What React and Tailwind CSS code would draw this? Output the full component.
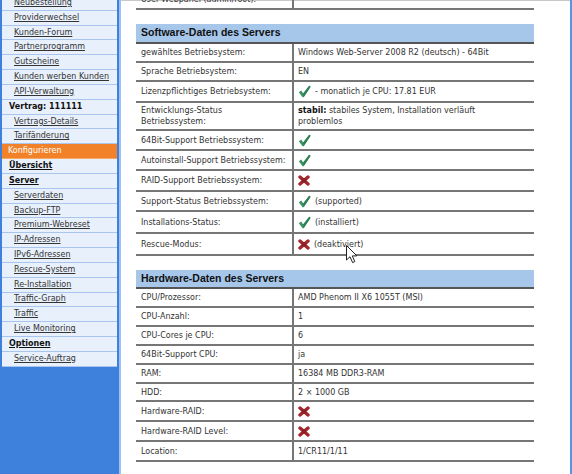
import React from "react";

const nav = [
  { t: "Neubestellung", k: "sub" },
  { t: "Providerwechsel", k: "sub" },
  { t: "Kunden-Forum", k: "sub" },
  { t: "Partnerprogramm", k: "sub" },
  { t: "Gutscheine", k: "sub" },
  { t: "Kunden werben Kunden", k: "sub" },
  { t: "API-Verwaltung", k: "sub" },
  { t: "Vertrag: 111111", k: "head" },
  { t: "Vertrags-Details", k: "sub" },
  { t: "Tarifänderung", k: "sub" },
  { t: "Konfigurieren", k: "orange" },
  { t: "Übersicht", k: "bold" },
  { t: "Server", k: "bold" },
  { t: "Serverdaten", k: "sub" },
  { t: "Backup-FTP", k: "sub" },
  { t: "Premium-Webreset", k: "sub" },
  { t: "IP-Adressen", k: "sub" },
  { t: "IPv6-Adressen", k: "sub" },
  { t: "Rescue-System", k: "sub" },
  { t: "Re-Installation", k: "sub" },
  { t: "Traffic-Graph", k: "sub" },
  { t: "Traffic", k: "sub" },
  { t: "Live Monitoring", k: "sub" },
  { t: "Optionen", k: "bold" },
  { t: "Service-Auftrag", k: "sub" },
];

function Check() {
  return (
    <svg width="13" height="13" viewBox="0 0 13 13" className="shrink-0">
      <path d="M0.8 7.2 L3.2 5.6 L5.2 8.4 L11.2 0.8 L12.6 1.8 L5.6 12.2 L4.6 12.2 Z" fill="#3a9464" />
      <path d="M5.2 8.4 L11.2 0.8 L12.6 1.8 L5.6 12.2 Z" fill="#2f7f54" />
    </svg>
  );
}

function Cross() {
  return (
    <svg width="12" height="11" viewBox="0 0 12 11" className="shrink-0">
      <path d="M2 2 L10 9 M10 2 L2 9" stroke="#a3262b" strokeWidth="3.4" strokeLinecap="round" />
      <circle cx="6" cy="5.5" r="2.3" fill="#8e1e24" />
    </svg>
  );
}

function Row({ label, h, children }) {
  return (
    <div className="flex border-b-2 border-[#767676]" style={{ height: h }}>
      <div className="w-[158px] shrink-0 border-r-2 border-[#767676] pl-[5px] flex items-center leading-[11px]">
        {label}
      </div>
      <div className="flex-1 pl-[4px] flex items-center gap-[4px] leading-[11px]">{children}</div>
    </div>
  );
}

function Header({ title, h }) {
  return (
    <div
      className="bg-[#a6c7ea] border-b-2 border-[#555] pl-[5px] flex items-center font-['Liberation_Sans',Arial,sans-serif] font-bold text-[10.5px] text-[#111]"
      style={{ height: h }}
    >
      {title}
    </div>
  );
}

export default function App() {
  return (
    <div className="relative flex w-[572px] h-[474px] overflow-hidden bg-white font-['DejaVu_Sans',Verdana,sans-serif] text-[8px] text-[#333]">
      {/* Sidebar */}
      <div className="w-[119px] shrink-0 bg-[#3e81dc] px-[2px]">
        <div className="-mt-[4px] flex flex-col">
          {nav.map((n, i) => {
            if (n.k === "orange")
              return (
                <div key={i} className="h-[14.83px] bg-[#f2822a] border-b border-[#f6a866] flex items-center pl-[6px] text-white">
                  {n.t}
                </div>
              );
            return (
              <div
                key={i}
                className={
                  "h-[14.83px] bg-[#e8f0fb] border-b border-[#a9c5ee] flex items-center " +
                  (n.k === "sub" ? "pl-[12px]" : "pl-[7px]")
                }
              >
                {n.k === "head" ? (
                  <span className="font-bold text-[#111]">{n.t}</span>
                ) : n.k === "bold" ? (
                  <span className="font-bold underline text-[#111]">{n.t}</span>
                ) : (
                  <span className="underline text-[#333]">{n.t}</span>
                )}
              </div>
            );
          })}
        </div>
      </div>
      <div className="w-[2px] shrink-0 bg-[#9fc1ee]" />

      {/* Content */}
      <div className="flex-1 border-t border-[#c8c8c8] pl-[15px] pr-[36px]">
        <div className="-mt-[10px]">
          <Row label="User-Webpanel (admin/root):" h={19}>
            <span></span>
          </Row>
        </div>

        <div className="mt-[14px]">
          <Header title="Software-Daten des Servers" h={20} />
          <Row label="gewähltes Betriebsystem:" h={19}>
            Windows Web-Server 2008 R2 (deutsch) - 64Bit
          </Row>
          <Row label="Sprache Betriebsystem:" h={19}>
            EN
          </Row>
          <Row label="Lizenzpflichtiges Betriebsystem:" h={21}>
            <Check />
            <span>- monatlich je CPU: 17.81 EUR</span>
          </Row>
          <Row
            label={
              <span>
                Entwicklungs-Status
                <br />
                Betriebssystem:
              </span>
            }
            h={28}
          >
            <span>
              <b className="text-[#111]">stabil:</b> stabiles System, Installation verläuft
              <br />
              problemlos
            </span>
          </Row>
          <Row label="64Bit-Support Betriebssystem:" h={20}>
            <Check />
          </Row>
          <Row label="Autoinstall-Support Betriebssystem:" h={20}>
            <Check />
          </Row>
          <Row label="RAID-Support Betriebssystem:" h={21}>
            <Cross />
          </Row>
          <Row label="Support-Status Betriebssystem:" h={20}>
            <Check />
            <span>(supported)</span>
          </Row>
          <Row label="Installations-Status:" h={22}>
            <Check />
            <span>(installiert)</span>
          </Row>
          <Row label="Rescue-Modus:" h={22}>
            <Cross />
            <span>(deaktiviert)</span>
          </Row>
        </div>

        <div className="mt-[14px]">
          <Header title="Hardware-Daten des Servers" h={19} />
          <Row label="CPU/Prozessor:" h={19}>AMD Phenom II X6 1055T (MSI)</Row>
          <Row label="CPU-Anzahl:" h={19}>1</Row>
          <Row label="CPU-Cores je CPU:" h={19}>6</Row>
          <Row label="64Bit-Support CPU:" h={19}>ja</Row>
          <Row label="RAM:" h={19}>16384 MB DDR3-RAM</Row>
          <Row label="HDD:" h={18}>2 × 1000 GB</Row>
          <Row label="Hardware-RAID:" h={20}>
            <Cross />
          </Row>
          <Row label="Hardware-RAID Level:" h={20}>
            <Cross />
          </Row>
          <Row label="Location:" h={20}>1/CR11/1/11</Row>
        </div>
      </div>
      <div className="w-[2px] shrink-0 bg-[#5d93e0]" />

      {/* mouse cursor */}
      <svg className="absolute left-[346px] top-[245px]" width="12" height="19" viewBox="0 0 12 19">
        <path d="M0.5 0.5 L0.5 15 L4 11.7 L6.6 17.6 L8.8 16.6 L6.3 10.9 L10.9 10.9 Z" fill="#fff" stroke="#222" strokeWidth="1" />
      </svg>
    </div>
  );
}
